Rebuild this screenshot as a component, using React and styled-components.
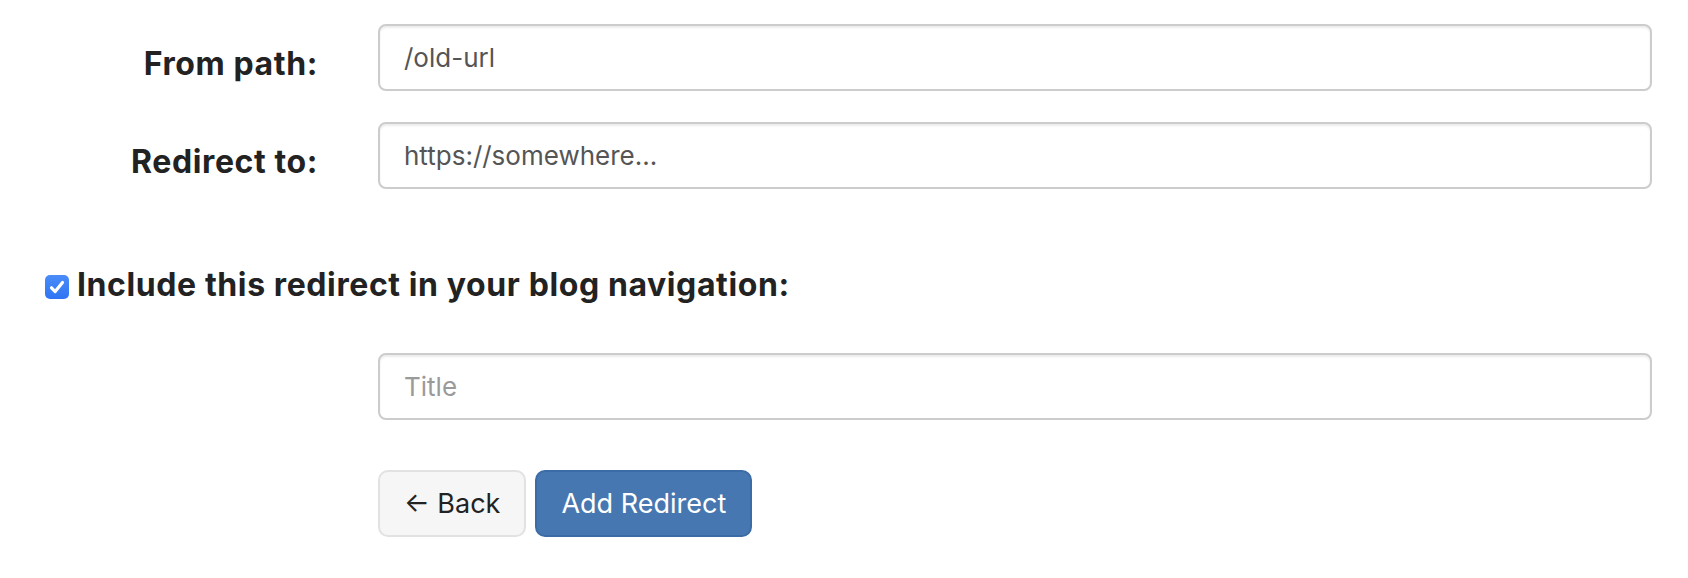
import React from "react";
import styled, { createGlobalStyle } from "styled-components";

const Global = createGlobalStyle`
  html, body { margin: 0; padding: 0; background: #fff; }
  body { font-family: Inter, "Noto Sans", sans-serif; color: #222; }
`;

const Form = styled.form`
  display: flex;
  flex-direction: column;
  padding: 24px 36px 0 0;
`;

const Row = styled.div`
  display: grid;
  grid-template-columns: 348px 1fr;
  margin-bottom: ${(p) => p.$mb || 0}px;
`;

const Label = styled.label`
  text-align: right;
  padding: 19px 30px 0 0;
  font-size: 32px;
  letter-spacing: 0.6px;
  line-height: 42px;
  font-weight: 700;
  color: #222;
`;

const Field = styled.div`
  grid-column: 2;
  padding-left: 30px;
  display: flex;
  gap: ${(p) => p.$gap || 0}px;
`;

const Input = styled.input`
  box-sizing: border-box;
  width: 100%;
  height: 67px;
  padding: 0 24px;
  border: 2px solid #cccccc;
  border-radius: 8px;
  box-shadow: inset 0 2px 2px rgba(0, 0, 0, 0.075);
  font-family: Inter, "Noto Sans", sans-serif;
  font-size: 26px;
  color: #555;
  background: #fff;
  outline: none;
  &::placeholder { color: #9a9a9a; }
`;

const CheckRow = styled.label`
  display: flex;
  align-items: center;
  gap: 8px;
  margin: 75px 0 47px 45px;
  font-size: 32px;
  letter-spacing: 0.6px;
  line-height: 42px;
  font-weight: 700;
  color: #222;
`;

const Box = styled.span`
  width: 24px;
  height: 24px;
  border-radius: 5px;
  background: linear-gradient(#4a8cf8, #2f74f4);
  display: inline-flex;
  align-items: center;
  justify-content: center;
  flex: none;
  margin-top: 3px;
`;

const Button = styled.button`
  box-sizing: border-box;
  height: 67px;
  padding: 0 24px;
  border-radius: 10px;
  font-family: Inter, "Noto Sans", sans-serif;
  font-size: 27px;
  cursor: pointer;
  border: 2px solid ${(p) => (p.$primary ? "#3c6ca5" : "#e2e2e2")};
  background: ${(p) => (p.$primary ? "#4677b0" : "#f6f6f6")};
  color: ${(p) => (p.$primary ? "#fff" : "#222")};
`;

export default function App() {
  return (
    <>
      <Global />
      <Form onSubmit={(e) => e.preventDefault()}>
        <Row $mb={31}>
          <Label>From path:</Label>
          <Field>
            <Input defaultValue="/old-url" />
          </Field>
        </Row>
        <Row>
          <Label>Redirect to:</Label>
          <Field>
            <Input defaultValue="https://somewhere..." />
          </Field>
        </Row>
        <CheckRow>
          <Box>
            <svg width="24" height="24" viewBox="0 0 24 24">
              <path d="M6.5 12.8 L10.2 16.6 L17.5 7.5" fill="none" stroke="#fff" strokeWidth="3.2" strokeLinecap="round" strokeLinejoin="round" />
            </svg>
          </Box>
          Include this redirect in your blog navigation:
        </CheckRow>
        <Row $mb={50}>
          <Field>
            <Input placeholder="Title" />
          </Field>
        </Row>
        <Row>
          <Field $gap={9}>
            <Button type="button">← Back</Button>
            <Button type="submit" $primary>Add Redirect</Button>
          </Field>
        </Row>
      </Form>
    </>
  );
}
